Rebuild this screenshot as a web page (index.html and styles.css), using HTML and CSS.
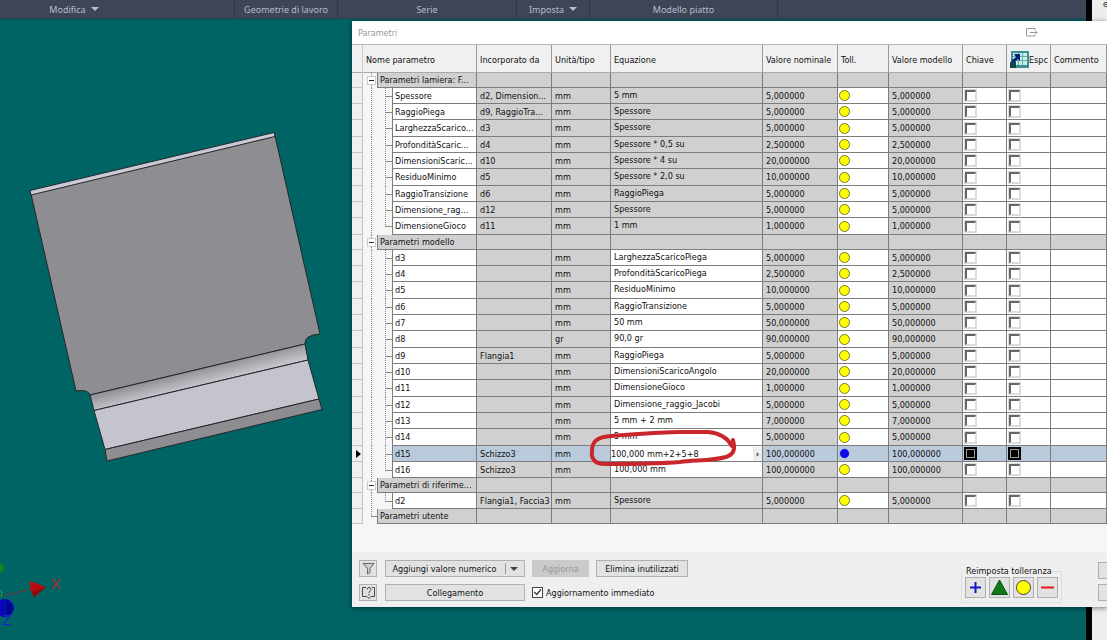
FILE: index.html
```html
<!doctype html>
<html lang="it">
    <head>
        <meta charset="utf-8">
        <title>Parametri</title>
        <link rel="stylesheet" href="styles.css">
    </head>
    <body>
        <div class="desktop">
            <main class="app">
                <nav class="ribbon">
                    <button class="panel modifica">Modifica <i class="caret"></i></button>
                    <span class="panel geometrie">Geometrie di lavoro</span>
                    <span class="panel serie">Serie</span>
                    <button class="panel imposta">Imposta <i class="caret"></i></button>
                    <span class="panel piatto">Modello piatto</span>
                </nav>
                <div class="viewport">
                    <svg class="model" width="350" height="620" viewBox="0 20 350 620">
                        <defs>
                            <linearGradient id="bend" gradientUnits="userSpaceOnUse" x1="196" y1="368" x2="201" y2="388">
                                <stop offset="0" stop-color="#8c8b90"/>
                                <stop offset="0.6" stop-color="#b5b4bb"/>
                                <stop offset="1" stop-color="#d0d0d8"/>
                            </linearGradient>
                        </defs>
                        <g stroke="#26262a" stroke-width="1" stroke-linejoin="round">
                            <path fill="#8e8d92" d="M31 194 L275 136 L320 334 Q304 335 305 344 L90 395 Q88 389 76 391 Z"/>
                            <path fill="#c9cad6" d="M30 190.500 L274 132.500 L275 136.500 L31 195 Z"/>
                            <path fill="url(#bend)" d="M90 395 L305 344 L308 360 L94 410.500 Z"/>
                            <path fill="#c4c4cf" d="M94 410.500 L308 360 L319 399 L105 449.500 Z"/>
                            <path fill="#8e8d92" d="M105 449.500 L319 399 L322 409.500 L107 461 Z"/>
                        </g>
                        <path stroke="#70383a" d="M2 596 L31 589"/>
                        <path fill="#b80d0d" d="M30 581 L46 587 L34 597 Q29 589 30 581 Z"/>
                        <path fill="#8f0808" d="M32 592 L46 587 L34 597 Z"/>
                        <circle cx="0" cy="568" r="4" fill="#0a8a1a"/>
                        <path fill="none" stroke="#1fae50" d="M0 590 Q3 592 1 597"/>
                        <circle cx="5" cy="608" r="9" fill="#0808b8"/>
                        <path fill="#05057c" d="M7 602 A7 7 0 0 1 7 615 Z"/>
                        <text x="51" y="589" class="axis-x">X</text>
                        <text x="2" y="625" class="axis-z">Z</text>
                    </svg>
                </div>
            </main>
            <aside class="neighbour">e</aside>
        </div>

        <section class="dialog">
            <header class="titlebar">
                <h1>Parametri</h1>
                <button aria-label="Sgancia">
                    <svg width="12" height="9" viewBox="0 0 12 9" fill="none" stroke="#999"><path d="M9 2.500V.5H.5V8H9V6.500M4 4.500H11M9.500 3L11 4.500L9.500 6"/></svg>
                </button>
            </header>

            <div class="grid">
                <table>
                    <colgroup>
                        <col class="c-mark"><col class="c-name"><col class="c-used"><col class="c-unit"><col class="c-eq">
                        <col class="c-nom"><col class="c-tol"><col class="c-mod"><col class="c-key"><col class="c-exp"><col>
                    </colgroup>
                    <thead>
                        <tr>
                            <th></th>
                            <th>Nome parametro</th>
                            <th>Incorporato da</th>
                            <th>Unità/tipo</th>
                            <th>Equazione</th>
                            <th>Valore nominale</th>
                            <th>Toll.</th>
                            <th>Valore modello</th>
                            <th>Chiave</th>
                            <th>
                                <div class="export">
                                    <svg width="19" height="19" viewBox="0 0 19 19">
                                        <rect x="1" y="1" width="18" height="17" fill="#3d8f93"/>
                                        <rect x="3" y="3" width="14" height="12" fill="#c8efe9"/>
                                        <path d="M3 6.500H17M3 10.500H17M8.500 3V15M12.500 3V15" stroke="#5fb0ac"/>
                                        <path d="M4 4H10V11L8 9L4 13L1 11L6 7Z" fill="#0a1f7a"/>
                                        <rect x="0" y="12" width="6" height="6" fill="#0d4b50"/>
                                    </svg>
                                    <span>Espc</span>
                                </div>
                            </th>
                            <th>Commento</th>
                        </tr>
                    </thead>
                </table>
            </div>

            <footer class="actions">
                <div class="left">
                    <div class="line">
                        <button class="btn square" aria-label="Filtro">
                            <svg width="13" height="13" viewBox="0 0 13 13" fill="#ccc" stroke="#666"><path d="M1 1.500H12L8 6.500V10.500L5.500 12V6.500Z"/></svg>
                        </button>
                        <button class="btn wide"><span>Aggiungi valore numerico</span><i class="split"></i><i class="caret"></i></button>
                        <button class="btn update" disabled>Aggiorna</button>
                        <button class="btn purge">Elimina inutilizzati</button>
                    </div>
                    <div class="line">
                        <button class="btn square" aria-label="Guida">
                            <svg width="13" height="13" viewBox="0 0 13 13" fill="none" stroke="#444"><path d="M4 1.500H.5V10.500H5L7 12.500L9 10.500H12.500V1.500H10"/><path d="M5 3.500Q5 1.500 7 1.500Q9 1.500 9 3.500Q9 4.500 7 6V7M7 8V9.500"/></svg>
                        </button>
                        <button class="btn wide"><span>Collegamento</span></button>
                        <label class="auto"><input type="checkbox" checked>Aggiornamento immediato</label>
                    </div>
                </div>
                <fieldset>
                    <legend>Reimposta tolleranza</legend>
                    <button class="btn" aria-label="Superiore"><svg width="17" height="17" viewBox="0 0 17 17"><path d="M8.500 3V14M3 8.500H14" stroke="#1414c8" stroke-width="2"/></svg></button>
                    <button class="btn" aria-label="Mediana"><svg width="17" height="17" viewBox="0 0 17 17"><path d="M8.500 1L16.500 15.500H.5Z" fill="#0f7a16" stroke="#0a4f10"/></svg></button>
                    <button class="btn" aria-label="Nominale"><svg width="17" height="17" viewBox="0 0 17 17"><circle cx="8.500" cy="8.500" r="7" fill="#ff0" stroke="#444"/></svg></button>
                    <button class="btn" aria-label="Inferiore"><svg width="17" height="17" viewBox="0 0 17 17"><path d="M2 8.500H15" stroke="#e01820" stroke-width="2"/></svg></button>
                </fieldset>
                <div class="right">
                    <button class="btn" aria-label="Riduci"></button>
                    <button class="btn" aria-label="Fine"></button>
                </div>
            </footer>

            <svg class="marker" width="150" height="40" viewBox="588 428 150 40" fill="none" stroke="#c9262c" stroke-width="4" stroke-linecap="round">
                <path d="M733 440 C735 448 735 454 726 457 C712 461 694 460 680 462 C655 464 625 464 605 464 C594 464 591 458 592 451 C592 442 596 437 612 436 C640 434 660 432 680 432 L708 432 C721 433 728 439 732 446"/>
            </svg>
        </section>

        <script>
            // nome, incorporato da, unità, equazione, valore
            const groups = [
                {
                    name: "Parametri lamiera: F...",
                    locked: true,
                    rows: [
                        ["Spessore", "d2, Dimension...", "mm", "5 mm", "5,000000"],
                        ["RaggioPiega", "d9, RaggioTra...", "mm", "Spessore", "5,000000"],
                        ["LarghezzaScarico...", "d3", "mm", "Spessore", "5,000000"],
                        ["ProfonditàScaric...", "d4", "mm", "Spessore * 0,5 su", "2,500000"],
                        ["DimensioniScaric...", "d10", "mm", "Spessore * 4 su", "20,000000"],
                        ["ResiduoMinimo", "d5", "mm", "Spessore * 2,0 su", "10,000000"],
                        ["RaggioTransizione", "d6", "mm", "RaggioPiega", "5,000000"],
                        ["Dimensione_rag...", "d12", "mm", "Spessore", "5,000000"],
                        ["DimensioneGioco", "d11", "mm", "1 mm", "1,000000"],
                    ],
                },
                {
                    name: "Parametri modello",
                    rows: [
                        ["d3", "", "mm", "LarghezzaScaricoPiega", "5,000000"],
                        ["d4", "", "mm", "ProfonditàScaricoPiega", "2,500000"],
                        ["d5", "", "mm", "ResiduoMinimo", "10,000000"],
                        ["d6", "", "mm", "RaggioTransizione", "5,000000"],
                        ["d7", "", "mm", "50 mm", "50,000000"],
                        ["d8", "", "gr", "90,0 gr", "90,000000"],
                        ["d9", "Flangia1", "mm", "RaggioPiega", "5,000000"],
                        ["d10", "", "mm", "DimensioniScaricoAngolo", "20,000000"],
                        ["d11", "", "mm", "DimensioneGioco", "1,000000"],
                        ["d12", "", "mm", "Dimensione_raggio_Jacobi", "5,000000"],
                        ["d13", "", "mm", "5 mm + 2 mm", "7,000000"],
                        ["d14", "", "mm", "5 mm", "5,000000"],
                        ["d15", "Schizzo3", "mm", "100,000 mm+2+5+8", "100,000000"],
                        ["d16", "Schizzo3", "mm", "100,000 mm", "100,000000"],
                    ],
                },
                {
                    name: "Parametri di riferime...",
                    locked: true,
                    rows: [["d2", "Flangia1, Faccia3", "mm", "Spessore", "5,000000"]],
                },
                { name: "Parametri utente", rows: [] },
            ];
            const selected = "d15";

            function groupRow(group) {
                const toggle = group.rows.length
                    ? '<i class="trunk"><button class="toggle" aria-label="Comprimi"></button></i>'
                    : '<i class="trunk end"></i>';
                return `<tr class="group"><td class="mark"></td>
                    <td class="name"><div class="node">${toggle}<span class="label">${group.name}</span></div></td>
                    ${"<td></td>".repeat(9)}</tr>`;
            }

            function paramRow([name, used, unit, eq, value], group) {
                const active = name === selected;
                const equation = active
                    ? `<div class="edit"><input type="text" aria-label="Equazione" value="${eq}"><button aria-label="Altro">›</button></div>`
                    : eq;
                return `<tr class="${active ? "active" : ""} ${group.locked ? "locked" : ""}">
                    <td class="mark">${active ? '<i class="arrow"></i>' : ""}</td>
                    <td class="name"><div class="node"><i class="trunk"></i><i class="branch"></i><span class="label">${name}</span></div></td>
                    <td class="ro">${used}</td>
                    <td class="ro">${unit}</td>
                    <td class="eq">${equation}</td>
                    <td class="ro">${value}</td>
                    <td class="tol"><i class="dot"></i></td>
                    <td class="ro">${value}</td>
                    <td class="check"><input type="checkbox" aria-label="Chiave ${name}"></td>
                    <td class="check"><input type="checkbox" aria-label="Esporta ${name}"></td>
                    <td></td></tr>`;
            }

            const table = document.querySelector("table");
            groups.forEach((group) => {
                const body = document.createElement("tbody");
                body.innerHTML = groupRow(group) + group.rows.map((row) => paramRow(row, group)).join("");
                table.append(body);
            });
        </script>
    </body>
</html>
```
FILE: styles.css
```css
* {
    box-sizing: border-box;
}

body {
    margin: 0;
    height: 100vh;
    overflow: hidden;
    font-family: "DejaVu Sans Condensed", "Noto Sans", sans-serif;
    font-size: 9px;
    color: #111;
}

button,
input {
    font: inherit;
    color: inherit;
    margin: 0;
    padding: 0;
}

/* cad window */
.desktop {
    display: flex;
    height: 100%;
}

.app {
    flex: 1;
    display: flex;
    flex-direction: column;
    border-right: 6px solid #000;
}

.ribbon {
    display: flex;
    height: 20px;
    background: #3e4556;
    border-bottom: 2px solid #1a4f59;
    font-family: "Noto Sans", sans-serif;
    color: #b9bec9;
}

.panel {
    display: flex;
    align-items: center;
    justify-content: center;
    gap: 5px;
    border: 0;
    border-right: 1px solid #2f3543;
    background: none;
}

.modifica {
    width: 235px;
    padding-right: 86px;
}

.geometrie {
    width: 103px;
}

.serie {
    width: 179px;
}

.imposta {
    width: 73px;
}

.piatto {
    width: 188px;
}

.caret {
    border: 4px solid transparent;
    border-top-color: currentColor;
    border-bottom: 0;
}

.viewport {
    flex: 1;
    background: #006464;
}

.model {
    display: block;
}

.axis-x,
.axis-z {
    font: 15px "Liberation Sans", sans-serif;
    fill: #b52a2a;
}

.axis-z {
    fill: #1522d8;
}

.neighbour {
    width: 15px;
    padding-left: 11px;
    background: #ededed;
    line-height: 8px;
    overflow: hidden;
}

/* parameters dialog */
.dialog {
    position: absolute;
    top: 21px;
    left: 352px;
    right: 0;
    background: #f6f6f6;
    box-shadow: 0 1px 5px rgba(0, 0, 0, 0.5);
}

.titlebar {
    display: flex;
    justify-content: space-between;
    align-items: center;
    height: 24px;
    padding: 0 69px 0 6px;
    background: #fff;
    border-bottom: 1px solid #b5b5b5;
}

.titlebar h1 {
    margin: 0;
    font-size: 9px;
    font-weight: normal;
    color: #999;
}

.titlebar button {
    display: flex;
    border: 0;
    background: none;
}

.grid {
    height: 507px;
}

table {
    width: 100%;
    table-layout: fixed;
    border-collapse: separate;
    border-spacing: 0;
}

.c-mark {
    width: 11px;
}

.c-name {
    width: 114px;
}

.c-used {
    width: 75px;
}

.c-unit {
    width: 59px;
}

.c-eq {
    width: 152px;
}

.c-nom {
    width: 75px;
}

.c-tol {
    width: 51px;
}

.c-mod {
    width: 74px;
}

.c-key,
.c-exp {
    width: 44px;
}

th,
td {
    padding: 0 0 0 3px;
    border-right: 1px solid #7d7d7d;
    border-bottom: 1px solid #7d7d7d;
    line-height: 12px;
    white-space: nowrap;
    overflow: hidden;
}

th {
    height: 28px;
    padding-top: 2px;
    background: #f0f0f0;
    border-right-color: #999;
    border-bottom-color: #aaa;
    font-weight: normal;
    text-align: left;
}

th:first-child {
    border-right-color: #ccc;
}

td {
    height: 16px;
    background: #fff;
}

tr:nth-child(3n + 1) td {
    height: 17px;
}

.group td,
tr.group:first-child td {
    height: 15px;
    background: #d0d0d0;
}

td.ro,
.locked td.eq {
    background: #d0d0d0;
}

.active td,
.active td.ro,
.active .label {
    background: #b9cadb;
}

td.mark,
.group td.mark,
tr.group:first-child td.mark {
    background: #f0f0f0;
    border-color: #c4c4c4;
    padding: 0 4px;
}

.arrow {
    display: block;
    width: 0;
    border: 4px solid transparent;
    border-left: 5px solid #000;
    border-right: 0;
}

td.name,
.group td.name,
tr.group:first-child td.name {
    padding: 0;
    background: #f6f6f6;
    border-bottom: 0;
}

.node {
    display: flex;
    height: 100%;
}

.label {
    flex: 1;
    display: flex;
    align-items: center;
    padding-left: 2px;
    background: #fff;
    border-left: 1px solid #7d7d7d;
    border-bottom: 1px solid #7d7d7d;
    overflow: hidden;
}

.group .label {
    background: #d0d0d0;
}

.trunk {
    display: flex;
    align-items: center;
    width: 22px;
    background: repeating-linear-gradient(#888 0 1px, transparent 1px 2px) 8px 0 / 1px 100% no-repeat;
}

.group .trunk {
    width: 14px;
}

.group .trunk.end {
    background:
        repeating-linear-gradient(#888 0 1px, transparent 1px 2px) 8px 0 / 1px 50% no-repeat,
        linear-gradient(#888, #888) 8px 50% / 6px 1px no-repeat;
}

.branch {
    width: 7px;
    background:
        repeating-linear-gradient(#888 0 1px, transparent 1px 2px) 0 0 / 1px 100% no-repeat,
        linear-gradient(#888, #888) 0 50% / 7px 1px no-repeat;
}

tr:last-child .branch {
    background-size: 1px 50%, 7px 1px;
}

.toggle {
    width: 9px;
    height: 9px;
    margin-left: 4px;
    border: 1px solid #ccc;
    background: linear-gradient(#222, #222) center / 5px 1px no-repeat #fff;
}

td.eq {
    padding-bottom: 2px;
}

.active td.eq {
    padding: 0;
    background: #fff;
}

.edit {
    display: flex;
    height: 14px;
}

.edit input {
    flex: 1;
    min-width: 0;
    border: 0;
    outline: 0;
    background: #fff;
}

.edit button {
    width: 9px;
    border: 0;
    background: #eee;
    font-weight: bold;
    line-height: 12px;
}

td.tol {
    padding: 0 1px;
}

.dot {
    display: block;
    width: 11px;
    height: 11px;
    border: 1px solid #77772a;
    border-radius: 50%;
    background: #ff0;
}

.active .dot {
    border: 1px solid #b9cadb;
    background: #0a0ae6;
}

td.check {
    padding-left: 2px;
}

.check input {
    appearance: none;
    display: block;
    width: 11px;
    height: 11px;
    border: 1px solid #dcdcdc;
    border-top: 2px solid #666;
    border-left: 2px solid #666;
    background: #fff;
    box-shadow: 0 0 0 1px #dcdcdc;
}

.active .check input {
    border: 1px solid #000;
    background: #000;
    box-shadow: inset 0 0 0 1px #999, 0 0 0 1px #000;
}

.export {
    display: flex;
    align-items: center;
}

/* bottom bar */
.actions {
    display: flex;
    align-items: flex-start;
    height: 55px;
    padding: 8px 0 0 7px;
    background: #efefef;
}

.left {
    flex: 1;
    display: flex;
    flex-direction: column;
    gap: 7px;
}

.line {
    display: flex;
    gap: 7px;
}

.btn {
    display: flex;
    align-items: center;
    justify-content: center;
    height: 17px;
    border: 1px solid #b0b0b0;
    background: #e2e2e2;
}

.square {
    width: 18px;
    margin-right: 1px;
}

.wide {
    width: 140px;
}

.wide .caret {
    margin-left: 4px;
    color: #444;
}

.split {
    width: 1px;
    height: 11px;
    margin-left: 8px;
    background: #999;
}

.update {
    width: 57px;
    border-color: #cacaca;
    background: #cacaca;
    color: #999;
}

.purge {
    width: 92px;
}

.auto {
    display: flex;
    align-items: center;
    gap: 3px;
}

.auto input {
    appearance: none;
    width: 11px;
    height: 11px;
    border: 1px solid #444;
    background: #fff;
}

.auto input:checked::before {
    content: "";
    display: block;
    height: 9px;
    background: #333;
    clip-path: polygon(8% 48%, 20% 38%, 40% 62%, 82% 10%, 94% 20%, 42% 84%);
}

fieldset {
    display: flex;
    gap: 3px;
    margin: 5px 36px 0 0;
    padding: 0 3px 4px;
    border: 1px solid #ddd;
}

legend {
    padding: 0 1px;
    line-height: 12px;
}

fieldset .btn {
    width: 21px;
    height: 21px;
}

.right {
    display: flex;
    flex-direction: column;
    gap: 5px;
    padding-top: 2px;
}

.right .btn {
    width: 9px;
    border-right: 0;
}

/* red pen mark over the edited equation */
.marker {
    position: absolute;
    top: 407px;
    left: 236px;
    pointer-events: none;
}
```
